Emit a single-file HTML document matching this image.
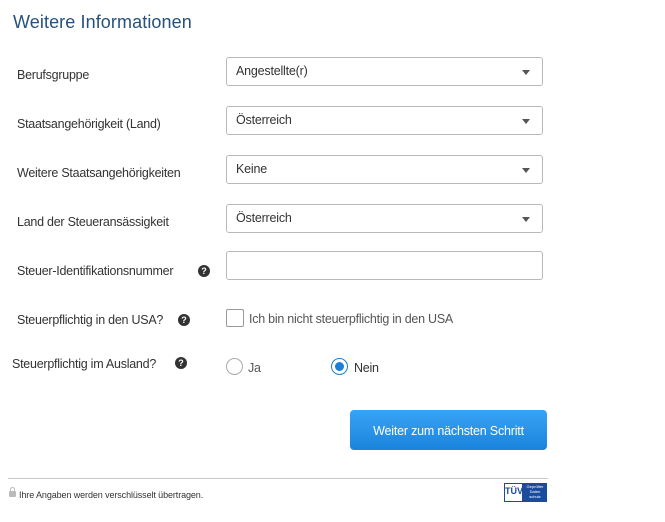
<!DOCTYPE html>
<html><head><meta charset="utf-8"><style>
*{box-sizing:border-box;margin:0;padding:0}
body{width:665px;height:522px;background:#fff;font-family:"Liberation Sans",sans-serif;color:#333;position:relative;overflow:hidden}
.a{position:absolute}
h1{position:absolute;left:13px;top:12px;font-size:18px;font-weight:normal;color:#25517e;letter-spacing:0.1px}
.lbl{position:absolute;font-size:12.5px;letter-spacing:-0.25px;color:#333}
.sel{position:absolute;left:226px;width:317px;height:29px;border:1px solid #b9b9b9;border-radius:3px;font-size:12.5px;letter-spacing:-0.2px;padding:6px 9px;color:#333}
.sel:after{content:"";position:absolute;right:12px;top:12px;border-left:4px solid transparent;border-right:4px solid transparent;border-top:5px solid #555}
.q{position:absolute;width:12px;height:12px;border-radius:50%;background:#333;color:#fff;font-size:9px;font-weight:bold;text-align:center;line-height:12px}
.rad{position:absolute;width:17px;height:17px;border-radius:50%;border:1px solid #aaa}
</style></head><body>
<h1>Weitere Informationen</h1>
<div class="lbl" style="left:17px;top:68px">Berufsgruppe</div>
<div class="sel" style="top:57px">Angestellte(r)</div>
<div class="lbl" style="left:17px;top:117px">Staatsangehörigkeit (Land)</div>
<div class="sel" style="top:106px">Österreich</div>
<div class="lbl" style="left:17px;top:166px">Weitere Staatsangehörigkeiten</div>
<div class="sel" style="top:155px">Keine</div>
<div class="lbl" style="left:17px;top:215px">Land der Steueransässigkeit</div>
<div class="sel" style="top:204px">Österreich</div>
<div class="lbl" style="left:17px;top:264px">Steuer-Identifikationsnummer</div>
<div class="q" style="left:198px;top:265px">?</div>
<div class="a" style="left:226px;top:251px;width:317px;height:29px;border:1px solid #b9b9b9;border-radius:3px"></div>
<div class="lbl" style="left:17px;top:313px">Steuerpflichtig in den USA?</div>
<div class="q" style="left:178px;top:314px">?</div>
<div class="a" style="left:226px;top:309px;width:18px;height:18px;border:1px solid #999;border-radius:2px"></div>
<div class="lbl" style="left:249px;top:312px;color:#555">Ich bin nicht steuerpflichtig in den USA</div>
<div class="lbl" style="left:12px;top:357px">Steuerpflichtig im Ausland?</div>
<div class="q" style="left:175px;top:357px">?</div>
<div class="rad" style="left:226px;top:358px"></div>
<div class="lbl" style="left:248px;top:361px;color:#555">Ja</div>
<div class="rad" style="left:331px;top:358px;border-color:#1a7fd8"><div style="position:absolute;left:3px;top:3px;width:9px;height:9px;border-radius:50%;background:#1a7fd8"></div></div>
<div class="lbl" style="left:354px;top:361px">Nein</div>
<div class="a" style="left:350px;top:410px;width:197px;height:40px;border-radius:4px;background:linear-gradient(#38a4f5,#1a83dc);color:#fff;font-size:12.5px;letter-spacing:-0.2px;text-align:center;line-height:42px">Weiter zum nächsten Schritt</div>
<div class="a" style="left:8px;top:478px;width:540px;height:1px;background:#c8c8c8"></div>
<div class="a" style="left:9px;top:491px;width:7px;height:6px;background:#bbb;border-radius:1px"></div>
<div class="a" style="left:10px;top:487px;width:5px;height:5px;border:1px solid #bbb;border-bottom:none;border-radius:3px 3px 0 0"></div>
<div class="a" style="left:19px;top:490px;font-size:9px;color:#333;letter-spacing:-0.1px">Ihre Angaben werden verschlüsselt übertragen.</div>
<div class="a" style="left:504px;top:483px;width:43px;height:19px;background:#1b4c9c"></div>
<div class="a" style="left:505px;top:484px;width:17px;height:17px;background:#fff;color:#1b4c9c;font-size:9px;font-weight:bold;text-align:center;line-height:14px">TÜV</div>
<div class="a" style="left:524px;top:484px;font-size:4px;color:#fff;line-height:5px;text-align:center;width:22px">Geprüfter Daten schutz</div>
</body></html>
